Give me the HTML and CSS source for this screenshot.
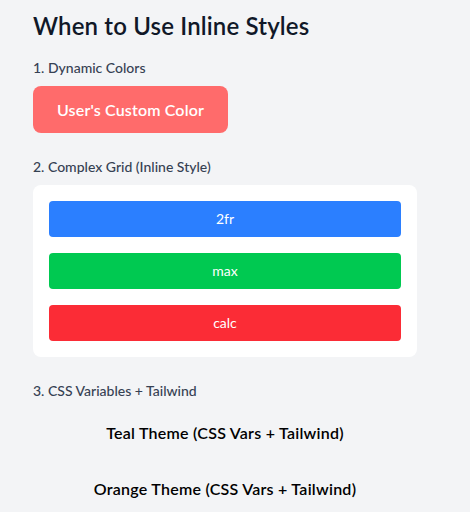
FILE: index.html
```html
<!DOCTYPE html>
<html lang="en">
<head>
<meta charset="utf-8">
<title>When to Use Inline Styles</title>
<link rel="stylesheet" href="styles.css">
</head>
<body>
<main class="page">
  <h1 class="title">When to Use Inline Styles</h1>

  <section class="section">
    <h2 class="label">1. Dynamic Colors</h2>
    <button class="custom-btn" style="background-color:#ff6b6b">User's Custom Color</button>
  </section>

  <section class="section">
    <h2 class="label">2. Complex Grid (Inline Style)</h2>
    <div class="card">
      <div class="grid">
        <div class="cell cell-blue">2fr</div>
        <div class="cell cell-green">max</div>
        <div class="cell cell-red">calc</div>
      </div>
    </div>
  </section>

  <section class="section">
    <h2 class="label">3. CSS Variables + Tailwind</h2>
    <div class="themes">
      <div class="theme">Teal Theme (CSS Vars + Tailwind)</div>
      <div class="theme">Orange Theme (CSS Vars + Tailwind)</div>
    </div>
  </section>
</main>
</body>
</html>
```

FILE: styles.css
```css
* { box-sizing: border-box; }

html, body {
  margin: 0;
  padding: 0;
  background: #f3f4f6;
}

body {
  font-family: Lato, "Noto Sans", sans-serif;
  color: #101828;
}

.page {
  padding: 10px 32px 0 33px;
}

.title {
  margin: 0 0 16px;
  font-size: 24px;
  line-height: 32px;
  font-weight: 600;
  letter-spacing: 0.16px;
  color: #101828;
}

.section {
  margin-bottom: 24px;
}

.label {
  margin: 0 0 8px;
  font-size: 14px;
  line-height: 20px;
  font-weight: 500;
  color: #364153;
}

.custom-btn {
  border: 0;
  border-radius: 8px;
  padding: 12px 24px;
  font-family: inherit;
  font-size: 16px;
  line-height: 23px;
  font-weight: 600;
  letter-spacing: 0.15px;
  color: #ffffff;
  cursor: pointer;
  display: block;
}

.card {
  width: 384px;
  background: #ffffff;
  border-radius: 8px;
  padding: 16px;
}

.grid {
  display: grid;
  gap: 16px;
}

.cell {
  border-radius: 4px;
  padding: 8px;
  font-size: 14px;
  line-height: 20px;
  color: #ffffff;
  text-align: center;
}

.cell-blue { background: #2b7fff; }
.cell-green { background: #00c951; }
.cell-red { background: #fb2c36; }

.themes {
  width: 384px;
  display: flex;
  flex-direction: column;
  gap: 8px;
}

.theme {
  padding: 12px 16px;
  font-size: 16px;
  line-height: 24px;
  font-weight: 600;
  letter-spacing: 0.25px;
  color: #000000;
  text-align: center;
}
```
